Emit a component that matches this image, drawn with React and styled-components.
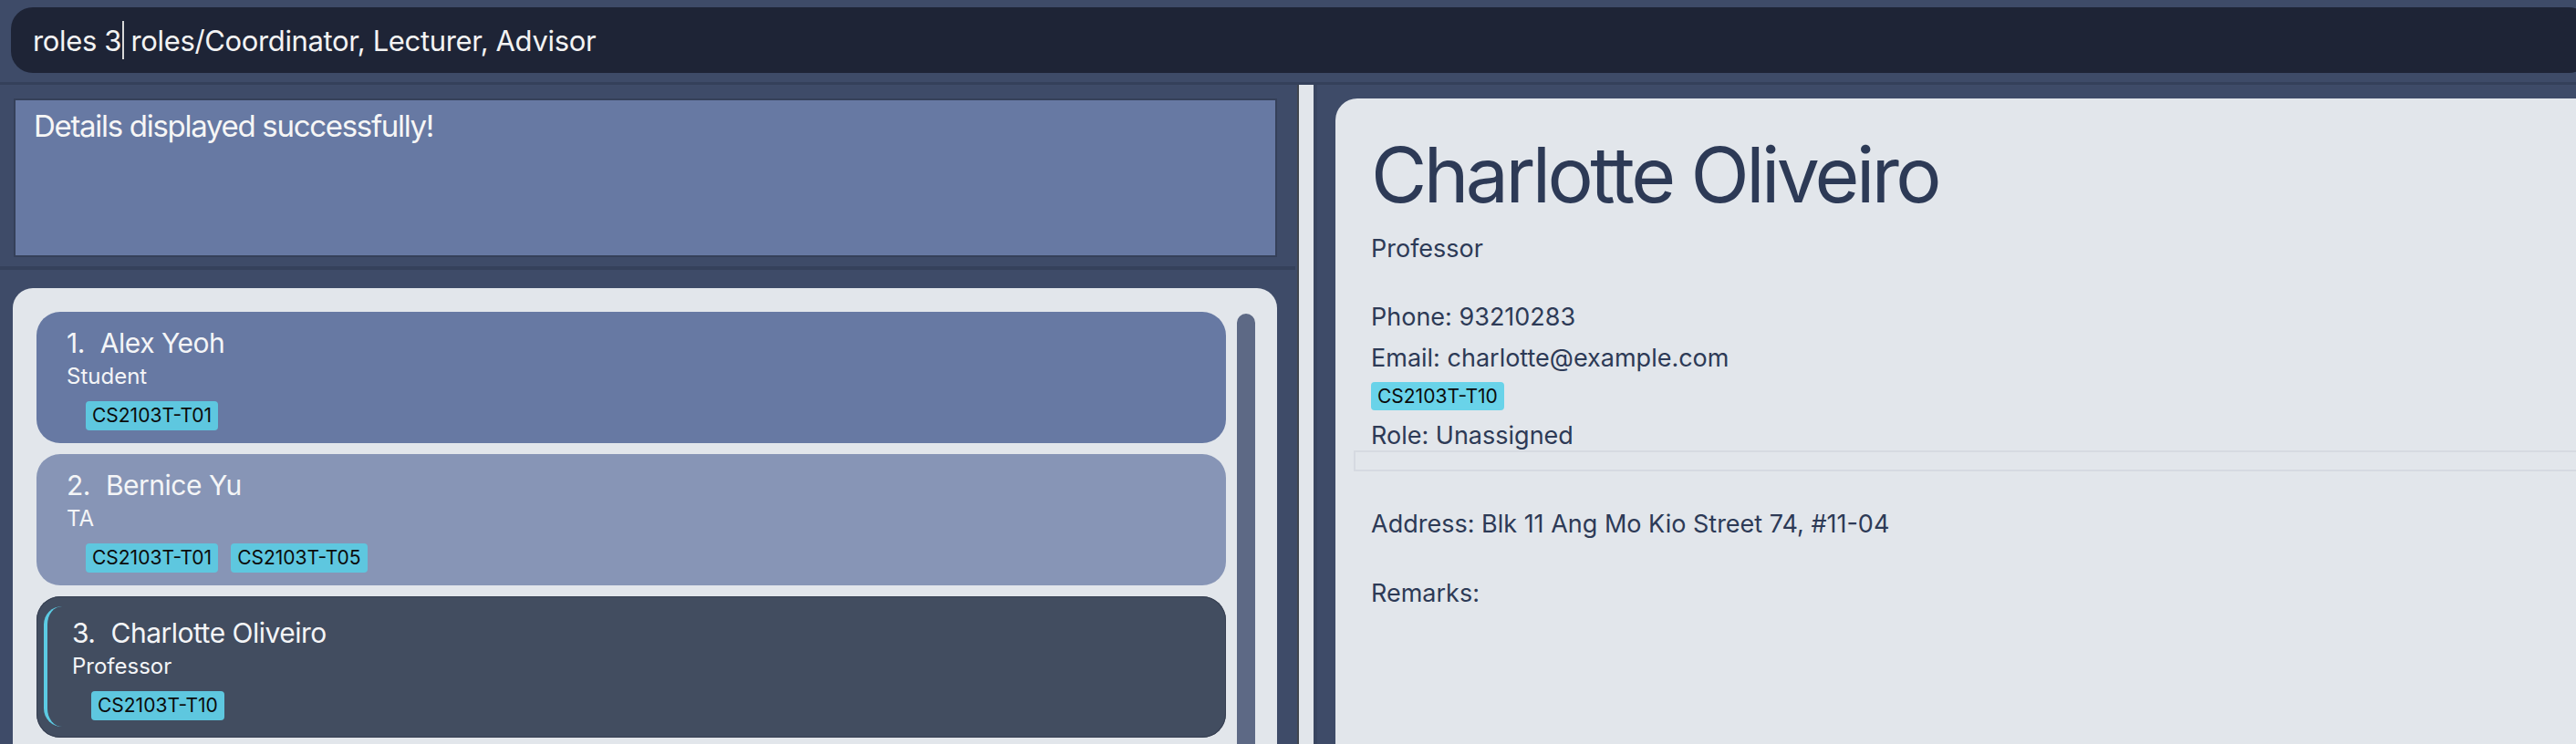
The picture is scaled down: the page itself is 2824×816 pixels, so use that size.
import React from 'react';
import styled, { createGlobalStyle } from 'styled-components';

const PANEL_BG = '#3e4b68';
const CARD_BG = '#e2e6eb';
const INK = '#2d3a56';

const GlobalStyle = createGlobalStyle`
  html, body {
    margin: 0;
    padding: 0;
    background: ${PANEL_BG};
  }
  body {
    font-family: Inter, "Noto Sans", sans-serif;
  }
`;

const AppWindow = styled.div`
  width: 2824px;
  height: 816px;
  overflow: hidden;
  background: ${PANEL_BG};
  display: flex;
  flex-direction: column;
`;

const CommandArea = styled.div`
  height: 93px;
  box-sizing: border-box;
  padding: 8px 0 0 12px;
  border-bottom: 3px solid #34405a;
`;

const CommandBox = styled.div`
  height: 72px;
  margin-right: -16px;
  padding-left: 24px;
  background: #1e2436;
  border-radius: 24px;
  display: flex;
  align-items: center;
  color: #f3f3f3;
  font-size: 31px;
  letter-spacing: -0.35px;
  white-space: pre;
`;

const Caret = styled.span`
  display: inline-block;
  width: 2px;
  height: 42px;
  margin: 0 -1px 0 1px;
  background: #d8d8d8;
`;

const Main = styled.div`
  flex: 1;
  display: flex;
  min-height: 0;
`;

const LeftColumn = styled.div`
  width: 1422px;
  display: flex;
  flex-direction: column;
`;

const ResultBox = styled.div`
  box-sizing: border-box;
  width: 1385px;
  height: 174px;
  margin: 15px 0 0 15px;
  padding: 8px 20px;
  background: #6779a3;
  border: 2px solid #354059;
  color: #f6f6f6;
  font-size: 33px;
  line-height: 40px;
  letter-spacing: -1.3px;
`;

const HorizontalRule = styled.div`
  width: 1420px;
  height: 4px;
  margin-top: 10px;
  background: #35415b;
`;

const ListCard = styled.div`
  flex: 1;
  box-sizing: border-box;
  width: 1386px;
  margin: 20px 0 0 14px;
  padding: 26px 24px 0 26px;
  background: ${CARD_BG};
  border-radius: 22px 22px 0 0;
  display: flex;
  gap: 12px;
`;

const PersonList = styled.div`
  flex: 1;
  display: flex;
  flex-direction: column;
  gap: 12px;
`;

const ScrollThumb = styled.div`
  width: 20px;
  margin-top: 2px;
  background: #5d6985;
  border-radius: 10px 10px 0 0;
`;

const CARD_COLORS = {
  primary: '#6779a3',
  muted: '#8795b6',
  selected: '#424d60',
};

const PersonCard = styled.div`
  background: ${(p) => CARD_COLORS[p.$tone]};
  border-radius: 26px;
  padding: ${(p) => (p.$selected ? '11px 8px 12px 8px' : '0')};
  box-shadow: ${(p) => (p.$selected ? 'inset 0 0 0 1px #363f51' : 'none')};
`;

const CardBody = styled.div`
  border-radius: 20px;
  border-left: ${(p) => (p.$selected ? '4px solid #5ccbe3' : 'none')};
  padding: ${(p) => (p.$selected ? '11px 20px 7px 27px' : '16px 20px 14px 33px')};
  color: #f4f5f7;
`;

const PersonName = styled.div`
  font-size: 30px;
  line-height: 36px;
  letter-spacing: -0.5px;
  display: flex;
`;

const Index = styled.span`
  margin-right: 17px;
`;

const PersonRole = styled.div`
  margin-top: 4px;
  font-size: 24px;
  line-height: 30px;
`;

const TagRow = styled.div`
  display: flex;
  gap: 14px;
  margin: ${(p) => p.$margin || '12px 0 0 21px'};
`;

const Tag = styled.span`
  display: inline-block;
  height: ${(p) => (p.$bright ? '31px' : '32px')};
  line-height: ${(p) => (p.$bright ? '31px' : '32px')};
  padding: 0 7px;
  border-radius: 4px;
  background: ${(p) => (p.$bright ? '#69d3e9' : '#5ec7df')};
  color: #0b0b0b;
  font-size: 21px;
`;

const SplitDivider = styled.div`
  width: 22px;
  box-sizing: border-box;
  background: ${CARD_BG};
  border-left: 2px solid #40454e;
  border-right: 4px solid #394560;
`;

const RightColumn = styled.div`
  flex: 1;
  display: flex;
  padding: 15px 0 0 20px;
`;

const DetailCard = styled.div`
  flex: 1;
  margin-right: -40px;
  padding: 34px 0 0 20px;
  background: ${CARD_BG};
  border-radius: 24px 24px 0 0;
  color: ${INK};
  display: flex;
  flex-direction: column;
`;

const DetailBlock = styled.div`
  padding-left: 19px;
  display: flex;
  flex-direction: column;
  align-items: flex-start;
`;

const DetailName = styled.h1`
  margin: 0;
  font-size: 84px;
  line-height: 100px;
  font-weight: 400;
  letter-spacing: -3.6px;
`;

const DetailLine = styled.div`
  font-size: 27px;
  line-height: ${(p) => p.$lh || '36px'};
  margin-top: ${(p) => p.$mt || '0'};
`;

const SectionRule = styled.div`
  height: 23px;
  box-sizing: border-box;
  margin-top: -2px;
  border: 2px solid #d6dae1;
  border-right: none;
`;

const people = [
  { name: 'Alex Yeoh', role: 'Student', tags: ['CS2103T-T01'], tone: 'primary' },
  { name: 'Bernice Yu', role: 'TA', tags: ['CS2103T-T01', 'CS2103T-T05'], tone: 'muted' },
  { name: 'Charlotte Oliveiro', role: 'Professor', tags: ['CS2103T-T10'], tone: 'selected', selected: true },
];

export default function App() {
  return (
    <AppWindow>
      <GlobalStyle />
      <CommandArea>
        <CommandBox>
          roles 3<Caret /> roles/Coordinator, Lecturer, Advisor
        </CommandBox>
      </CommandArea>

      <Main>
        <LeftColumn>
          <ResultBox>Details displayed successfully!</ResultBox>
          <HorizontalRule />
          <ListCard>
            <PersonList>
              {people.map((p, i) => (
                <PersonCard key={p.name} $tone={p.tone} $selected={p.selected}>
                  <CardBody $selected={p.selected}>
                    <PersonName>
                      <Index>{i + 1}.</Index>
                      {p.name}
                    </PersonName>
                    <PersonRole>{p.role}</PersonRole>
                    <TagRow>
                      {p.tags.map((t) => (
                        <Tag key={t}>{t}</Tag>
                      ))}
                    </TagRow>
                  </CardBody>
                </PersonCard>
              ))}
            </PersonList>
            <ScrollThumb />
          </ListCard>
        </LeftColumn>

        <SplitDivider />

        <RightColumn>
          <DetailCard>
            <DetailBlock>
              <DetailName>Charlotte Oliveiro</DetailName>
              <DetailLine $mt="13px">Professor</DetailLine>
              <DetailLine $mt="34px" $lh="45px">Phone: 93210283</DetailLine>
              <DetailLine $lh="45px">Email: charlotte@example.com</DetailLine>
              <TagRow $margin="4px 0 0 0">
                <Tag $bright>CS2103T-T10</Tag>
              </TagRow>
              <DetailLine $mt="10px">Role: Unassigned</DetailLine>
            </DetailBlock>
            <SectionRule />
            <DetailBlock>
              <DetailLine $mt="40px">Address: Blk 11 Ang Mo Kio Street 74, #11-04</DetailLine>
              <DetailLine $mt="40px">Remarks:</DetailLine>
            </DetailBlock>
          </DetailCard>
        </RightColumn>
      </Main>
    </AppWindow>
  );
}
